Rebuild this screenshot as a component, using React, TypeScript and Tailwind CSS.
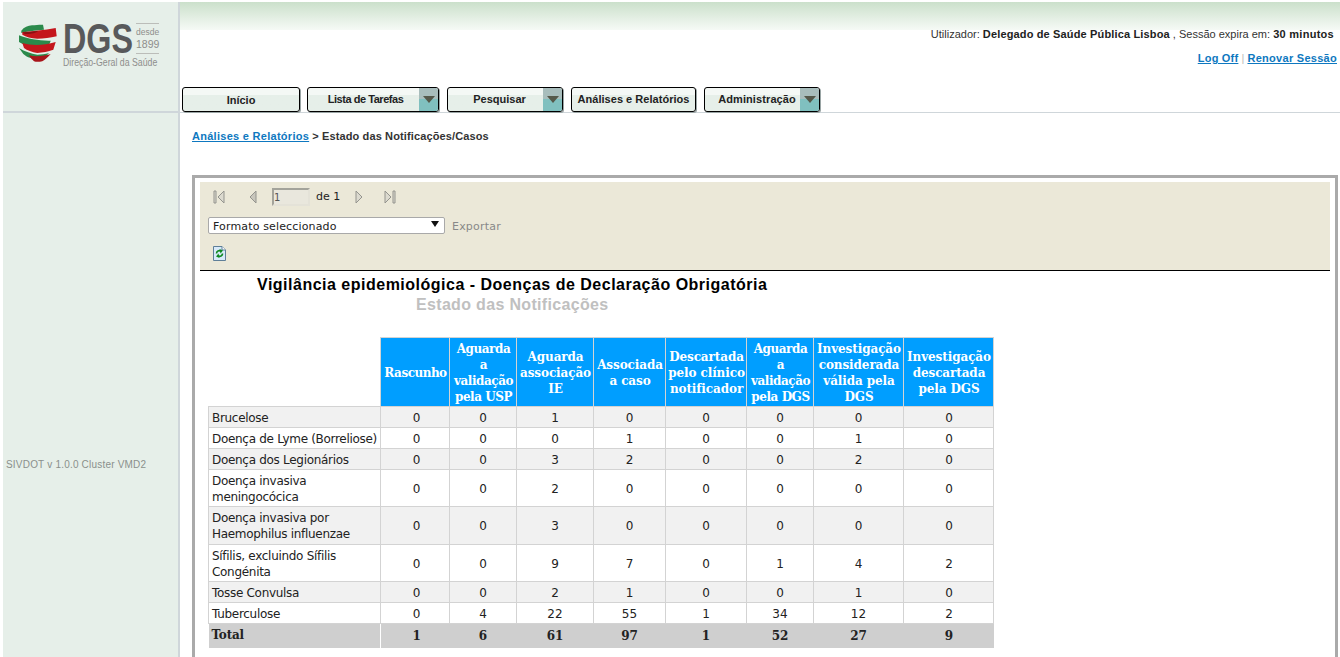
const cols = [172, 69, 67, 77, 72, 81, 67, 90, 90];
const rows: [string[], number, (string | number)[], boolean][] = [
  [["Brucelose"], 21, [0, 0, 1, 0, 0, 0, 0, 0], true],
  [["Doença de Lyme (Borreliose)"], 21, [0, 0, 0, 1, 0, 0, 1, 0], false],
  [["Doença dos Legionários"], 21, [0, 0, 3, 2, 0, 0, 2, 0], true],
  [["Doença invasiva", "meningocócica"], 37, [0, 0, 2, 0, 0, 0, 0, 0], false],
  [["Doença invasiva por", "Haemophilus influenzae"], 38, [0, 0, 3, 0, 0, 0, 0, 0], true],
  [["Sífilis, excluindo Sífilis", "Congénita"], 37, [0, 0, 9, 7, 0, 1, 4, 2], false],
  [["Tosse Convulsa"], 21, [0, 0, 2, 1, 0, 0, 1, 0], true],
  [["Tuberculose"], 21, [0, 4, 22, 55, 1, 34, 12, 2], false],
];
const heads = [
  ["Rascunho"],
  ["Aguarda", "a", "validação", "pela USP"],
  ["Aguarda", "associação", "IE"],
  ["Associada", "a caso"],
  ["Descartada", "pelo clínico", "notificador"],
  ["Aguarda", "a", "validação", "pela DGS"],
  ["Investigação", "considerada", "válida pela", "DGS"],
  ["Investigação", "descartada", "pela DGS"],
];
const totals = [1, 6, 61, 97, 1, 52, 27, 9];

function Lines({ l }: { l: string[] }) {
  return <>{l.map((t, i) => <div key={i}>{t}</div>)}</>;
}

function NavButton({ label, width, arrow, text }: { label: string; width: string; arrow?: boolean; text: string }) {
  return (
    <div className={`${width} h-[25px] flex border border-black rounded-[3px] bg-gradient-to-b from-[#f4f8f5] from-30% to-[#e6efe9] to-30% shadow-[1px_1px_0_#9aa5a5] overflow-hidden`}>
      <div className={`flex-1 flex items-center justify-center text-[11px] font-bold text-[#222] ${text}`}>{label}</div>
      {arrow && (
        <div className="w-[19px] bg-gradient-to-b from-[#a8bdbc] from-50% to-[#80c0bf] to-50% flex items-center justify-center">
          <svg width="12" height="7" viewBox="0 0 12 7"><path d="M0 0H12L6 7Z" fill="#55584a" /></svg>
        </div>
      )}
    </div>
  );
}

function Logo() {
  return (
    <div className="flex items-start pt-[21px] pl-[15px]">
      <svg width="41" height="40" viewBox="0 0 41 40" className="mt-[1px]">
        <path d="M3.300 6.700C6 3 10 1.500 14 1.300C18 1 22 0.500 25 0.700L26 5.700C22 6 19 6.200 16 6.700C11 7.300 7 8 3.300 9Z" fill="#2b8a4b" />
        <path d="M4.300 8C14 7.500 26 6 37.700 4L38.700 12.300C32 14 26 14.700 19.300 14.700C13 14.500 8 13 4.300 10.700Z" fill="#c4161c" />
        <path d="M4.500 8.500C10 8 15 7.500 20 7C18 9 12 10.500 7 10Z" fill="#8a1014" />
        <path d="M1 11.300C10 15 22 17 32.700 16.700L31 21.300C26 22.300 21 22.500 16 22.300C10 22 5 20.500 1 18Z" fill="#2b8a4b" />
        <path d="M4.300 19C14 22 26 21.500 37.700 18L35.300 25.700C30 27.500 25 28.500 19.300 29C14 28 9 26.500 6 24Z" fill="#c4161c" />
        <path d="M1 24C7 27.500 13 29.800 19.300 30.700C23 30.500 27 30 31 29C29 31 28 32.500 26 33.300C22 34.300 17 34.500 12.700 34C9 33 7 31.500 5.300 30Z" fill="#2b8a4b" />
        <path d="M11 31.300C18 33 26 32 32.700 30C30 33 27 36 24.300 37.300C21 38 18 38 16 37.300C14 35.500 12 33.500 11 31.300Z" fill="#a8141a" />
      </svg>
      <div className="ml-[4px] w-[97px] font-['Liberation_Sans',sans-serif] text-[#8e8e8c]">
        <div className="flex items-start h-[33px]">
          <div className="w-[73px] text-[42px] leading-[31px] font-bold text-[#58595b] scale-x-[0.77] origin-left whitespace-nowrap">DGS</div>
          <div className="w-[23px] h-[31px] border-y border-[#bbbdb9] text-center text-[8.5px] leading-[12px] pt-[2px] font-['Liberation_Sans_Narrow','Liberation_Sans',sans-serif]">
            <div>desde</div>
            <div className="text-[10.5px] leading-[12px]">1899</div>
          </div>
        </div>
        <div className="text-[11.5px] leading-[13px] whitespace-nowrap scale-x-[0.76] origin-left">Direção-Geral da Saúde</div>
      </div>
    </div>
  );
}

function First() {
  return <svg width="12" height="14" viewBox="0 0 12 14"><path d="M1 1H3V13H1ZM11 1V13L5 7Z" fill="#dcdacf" stroke="#94948e" strokeWidth="1" /></svg>;
}
function Prev() {
  return <svg width="8" height="14" viewBox="0 0 8 14"><path d="M7 1V13L1 7Z" fill="#c8c6bc" stroke="#94948e" /></svg>;
}
function Next() {
  return <svg width="8" height="14" viewBox="0 0 8 14"><path d="M1 1V13L7 7Z" fill="#dcdacf" stroke="#94948e" /></svg>;
}
function Last() {
  return <svg width="12" height="14" viewBox="0 0 12 14"><path d="M9 1H11V13H9ZM1 1V13L7 7Z" fill="#dcdacf" stroke="#94948e" strokeWidth="1" /></svg>;
}
function Refresh() {
  return (
    <svg width="13" height="15" viewBox="0 0 13 15">
      <path d="M0.500 0.500H9L12.500 4V14.500H0.500Z" fill="#d8eafa" stroke="#5f7f98" />
      <path d="M9 0.500V4H12.500" fill="#fff" stroke="#5f7f98" />
      <path d="M3.500 7.500C3.500 5 6 4 8 5.200" fill="none" stroke="#108a20" strokeWidth="1.600" />
      <path d="M6.500 3L10 4.500L7.500 7.500Z" fill="#108a20" />
      <path d="M9.500 7.500C9.500 10 7 11 5 9.800" fill="none" stroke="#108a20" strokeWidth="1.600" />
      <path d="M6.500 12L3 10.500L5.500 7.500Z" fill="#108a20" />
    </svg>
  );
}

export default function App() {
  return (
    <div className="h-[657px] overflow-hidden bg-white pt-[2px] pl-[3px] flex font-['Liberation_Sans',sans-serif] text-[#222]">
      <aside className="w-[177px] shrink-0 bg-[#e6efe9] border-r-2 border-[#cfd6da] flex flex-col">
        <div className="h-[111px] border-b-2 border-[#cfd6da]">
          <Logo />
        </div>
        <div className="flex-1 flex items-center pl-[3px] pt-[158px] text-[10px] text-[#8a8f8c] tracking-[0.2px] whitespace-nowrap">SIVDOT v 1.0.0 Cluster VMD2</div>
      </aside>
      <main className="flex-1 min-w-0">
        <header className="h-[111px] border-b border-[#cfd6da] flex flex-col">
          <div className="h-[28px] shrink-0 bg-gradient-to-b from-[#cbe0cb] to-[#f6faf6]" />
          <div className="flex justify-end pr-[6px] text-[11px] leading-[9px] whitespace-nowrap text-[#333]">
            <span>Utilizador:&nbsp;</span>
            <b className="tracking-[0.15px] text-[#222]">Delegado de Saúde Pública Lisboa</b>
            <span>&nbsp;, Sessão expira em:&nbsp;</span>
            <b className="tracking-[0.28px] text-[#222]">30 minutos</b>
          </div>
          <div className="flex justify-end pr-[3px] mt-[12px] text-[11px] leading-[14px] font-bold tracking-[0.22px] text-[#0e78c0]">
            <span className="underline">Log Off</span>
            <span className="mx-[3px] font-normal text-[#bbb]">|</span>
            <span className="underline tracking-[0.28px]">Renovar Sessão</span>
          </div>
          <nav className="flex gap-[8px] pl-[2px] mt-[22px]">
            <NavButton label="Início" width="w-[118px] -mr-px" text="pt-[1px]" />
            <NavButton label="Lista de Tarefas" width="w-[132px]" arrow text="pl-[4px] pb-[1px] tracking-[-0.45px]" />
            <NavButton label="Pesquisar" width="w-[116px]" arrow text="pl-[8px] pb-[1px]" />
            <NavButton label="Análises e Relatórios" width="w-[125px]" text="pb-[1px] tracking-[0.03px]" />
            <NavButton label="Administração" width="w-[116px]" arrow text="pl-[9px] pb-[1px] tracking-[0.1px]" />
          </nav>
        </header>

        <div className="pl-[12px] pt-[17px] text-[11px] leading-[13px] font-bold text-[#333]">
          <span className="text-[#0e78c0] underline tracking-[0.28px]">Análises e Relatórios</span>
          <span className="tracking-[0.12px]"> &gt; Estado das Notificações/Casos</span>
        </div>

        <section className="ml-[12px] mr-[2px] mt-[32px] h-[600px] border-[3px] border-[#aaaaaa] pt-[4px] px-[5px]">
          <div className="h-[89px] bg-[#ebe8d8] border-b border-black font-['DejaVu_Sans',sans-serif] text-[11px] pl-[8px] pt-[6px]">
            <div className="flex items-center h-[17px] pl-[5px]">
              <First />
              <span className="w-[24px]" />
              <Prev />
              <span className="w-[15px]" />
              <div className="w-[38px] h-[18px] border-2 border-[#a3a39b] border-b-[#e4e2d8] border-r-[#e4e2d8] bg-[#e9e7dd] text-[10px] leading-[16px] text-[#555]">1</div>
              <span className="ml-[6px] pt-[1px] text-[#222]">de 1</span>
              <span className="w-[15px]" />
              <Next />
              <span className="w-[21px]" />
              <Last />
            </div>
            <div className="flex items-center mt-[12px] h-[17px]">
              <div className="w-[237px] h-[17px] bg-white border border-[#a9a9a9] rounded-[2px] flex items-center justify-between pl-[4px] pr-[5px] text-[#222]">
                <span className="pt-[3px] tracking-[0.15px]">Formato seleccionado</span>
                <svg width="8" height="6" viewBox="0 0 8 6" className="mb-[3px]"><path d="M0 0H8L4 6Z" fill="#111" /></svg>
              </div>
              <span className="ml-[7px] pt-[3px] text-[#888] tracking-[0.2px]">Exportar</span>
            </div>
            <div className="mt-[12px] pl-[5px]"><Refresh /></div>
          </div>

          <div className="bg-white">
            <div className="pl-[57px] pt-[4px] text-[16px] leading-[19px] font-bold tracking-[0.5px] text-black whitespace-nowrap">Vigilância epidemiológica - Doenças de Declaração Obrigatória</div>
            <div className="pl-[216px] text-[16px] leading-[21px] font-bold tracking-[0.33px] text-[#c0c0c0] whitespace-nowrap">Estado das Notificações</div>

            <table className="ml-[8px] mt-[22px] border-collapse table-fixed w-[785px] font-['DejaVu_Sans',sans-serif] text-[12px] leading-[16px] text-[#222]">
              <colgroup>{cols.map((w, i) => <col key={i} style={{ width: w }} />)}</colgroup>
              <thead>
                <tr className="h-[69px]">
                  <th className="p-0" />
                  {heads.map((h, i) => (
                    <th key={i} className={`p-0 pt-[1px] bg-[#009eff] border border-[#d3d3d3] text-white text-center font-bold text-[12px] leading-[16px] font-['DejaVu_Serif',serif] whitespace-nowrap overflow-hidden ${i === 0 ? "tracking-[-0.5px] pl-[1px]" : i === 1 || i === 5 ? "tracking-[-0.45px] pl-[1px]" : "tracking-[-0.1px] pl-[1px]"}`}>
                      <Lines l={h} />
                    </th>
                  ))}
                </tr>
              </thead>
              <tbody>
                {rows.map(([name, h, vals, shade], i) => (
                  <tr key={i} style={{ height: h }} className={shade ? "bg-[#f1f1f1]" : "bg-white"}>
                    <td className="p-0 pl-[3px] pt-[1px] border border-[#d3d3d3] whitespace-nowrap tracking-[-0.3px]"><Lines l={name} /></td>
                    {vals.map((v, j) => (
                      <td key={j} className={`p-0 pt-[1px] border border-[#d3d3d3] text-center ${j === 0 ? "pl-[3px]" : j === 7 ? "pl-[1px]" : ""}`}>{v}</td>
                    ))}
                  </tr>
                ))}
                <tr className="h-[24px] bg-[#cfcfcf] font-bold text-[#222]">
                  <td className="p-0 pl-[3px] pb-[1px] border-r border-white font-['DejaVu_Serif',serif] tracking-[-0.2px]">Total</td>
                  {totals.map((v, j) => (
                    <td key={j} className={`p-0 pt-[1px] text-center font-['DejaVu_Serif',serif] ${j === 0 ? "pl-[3px]" : j === 7 ? "pl-[1px]" : ""}`}>{v}</td>
                  ))}
                </tr>
              </tbody>
            </table>
          </div>
        </section>
      </main>
    </div>
  );
}
